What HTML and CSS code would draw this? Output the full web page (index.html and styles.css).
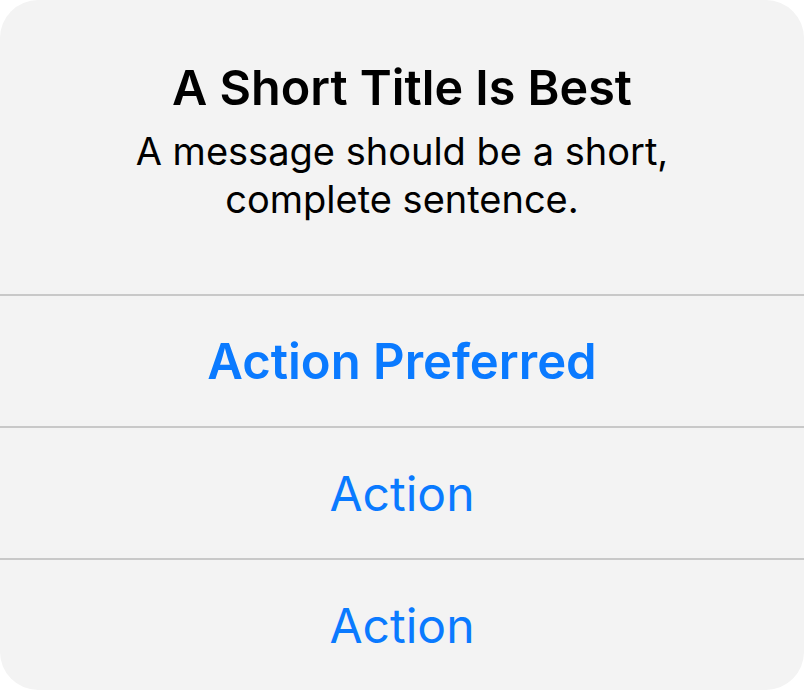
FILE: index.html
```html
<!DOCTYPE html>
<html>
<head>
<meta charset="utf-8">
<link rel="stylesheet" href="styles.css">
</head>
<body>
<div class="alert">
  <div class="header">
    <h1 class="title">A Short Title Is Best</h1>
    <p class="message">A message should be a short,<br>complete sentence.</p>
  </div>
  <div class="action preferred">Action Preferred</div>
  <div class="action">Action</div>
  <div class="action">Action</div>
</div>
</body>
</html>
```
FILE: styles.css
```css
html, body {
  margin: 0;
  padding: 0;
  background: #ffffff;
}
body {
  width: 804px;
  height: 690px;
  font-family: Inter, "Noto Sans", sans-serif;
}
.alert {
  width: 804px;
  height: 690px;
  background: #f3f3f3;
  border-radius: 38px;
  overflow: hidden;
  display: flex;
  flex-direction: column;
}
.header {
  height: 294px;
  box-sizing: border-box;
  padding-top: 59px;
  text-align: center;
}
.title {
  margin: 0;
  font-size: 48.5px;
  font-weight: 600;
  line-height: 58px;
  color: #000;
}
.message {
  margin: 10px 0 0;
  font-size: 38px;
  font-weight: 400;
  line-height: 48px;
  color: #000;
}
.action {
  height: 132px;
  box-sizing: border-box;
  border-top: 2px solid #c8c8c8;
  display: flex;
  align-items: center;
  justify-content: center;
  font-size: 48px;
  color: #0a7aff;
}
.preferred {
  font-size: 49px;
  font-weight: 600;
}
```
